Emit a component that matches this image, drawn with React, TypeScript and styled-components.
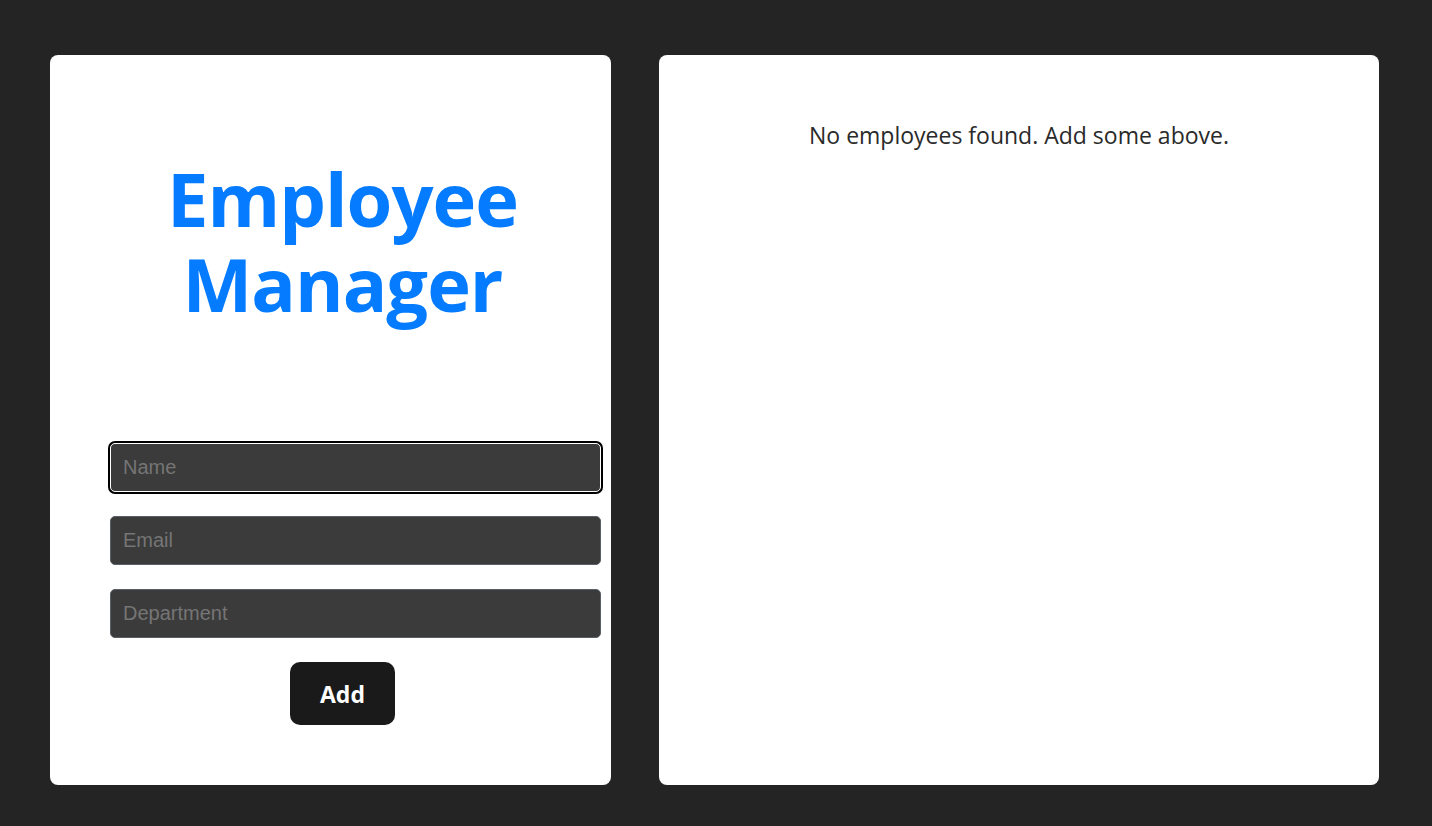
import styled, { createGlobalStyle } from 'styled-components';

const GlobalStyle = createGlobalStyle`
    html, body {
        margin: 0;
        padding: 0;
        background: #242424;
    }

    body {
        font-family: 'Open Sans', 'Noto Sans', sans-serif;
    }
`;

const fields = [
    { name: 'name', placeholder: 'Name', focused: true },
    { name: 'email', placeholder: 'Email', focused: false },
    { name: 'department', placeholder: 'Department', focused: false },
];

const App = () => {
    return (
        <>
            <GlobalStyle />
            <Page>
                <FormCard>
                    <Title>
                        Employee
                        <br />
                        Manager
                    </Title>
                    <Form onSubmit={(e) => e.preventDefault()}>
                        {fields.map((field) => (
                            <Input key={field.name} name={field.name} placeholder={field.placeholder} $focused={field.focused} />
                        ))}
                        <AddButton type="submit">Add</AddButton>
                    </Form>
                </FormCard>
                <ListCard>
                    <EmptyText>No employees found. Add some above.</EmptyText>
                </ListCard>
            </Page>
        </>
    );
};

const Page = styled.div`
    display: flex;
    gap: 48px;
    padding: 55px 53px 41px 50px;
    height: 826px;
    box-sizing: border-box;
`;

const Card = styled.section`
    background: #ffffff;
    border-radius: 8px;
    box-sizing: border-box;
`;

const FormCard = styled(Card)`
    width: 561px;
    display: flex;
    flex-direction: column;
    padding: 101px 0 0 24px;
`;

const ListCard = styled(Card)`
    flex: 1;
    padding-top: 66px;
    text-align: center;
`;

const Title = styled.h1`
    margin: 0;
    text-align: center;
    color: #057cff;
    font-size: 74px;
    line-height: 85px;
    font-weight: 700;
    letter-spacing: -1px;
`;

const Form = styled.form`
    display: flex;
    flex-direction: column;
    align-items: center;
    gap: 24px;
    margin-top: 117px;
    padding: 0 10px 0 36px;
`;

const Input = styled.input<{ $focused?: boolean }>`
    width: 100%;
    height: 49px;
    box-sizing: border-box;
    padding: 0 12px;
    background: #3b3b3b;
    border: 1px solid ${(p) => (p.$focused ? '#ffffff' : '#5a5f66')};
    border-radius: 5px;
    color: #ffffff;
    font-family: 'Liberation Sans', Arial, sans-serif;
    font-size: 20px;
    outline: none;
    box-shadow: ${(p) => (p.$focused ? '0 0 0 2px #000000' : 'none')};

    &::placeholder {
        color: #757575;
    }
`;

const AddButton = styled.button`
    width: 105px;
    height: 63px;
    margin-right: 26px;
    border: none;
    border-radius: 10px;
    background: #1a1a1a;
    color: #ffffff;
    font-family: 'Open Sans', 'Noto Sans', sans-serif;
    font-size: 23px;
    font-weight: 700;
    cursor: pointer;
`;

const EmptyText = styled.p`
    margin: 0;
    color: #2a2a2a;
    font-size: 23px;
    line-height: 28px;
`;

export default App;
